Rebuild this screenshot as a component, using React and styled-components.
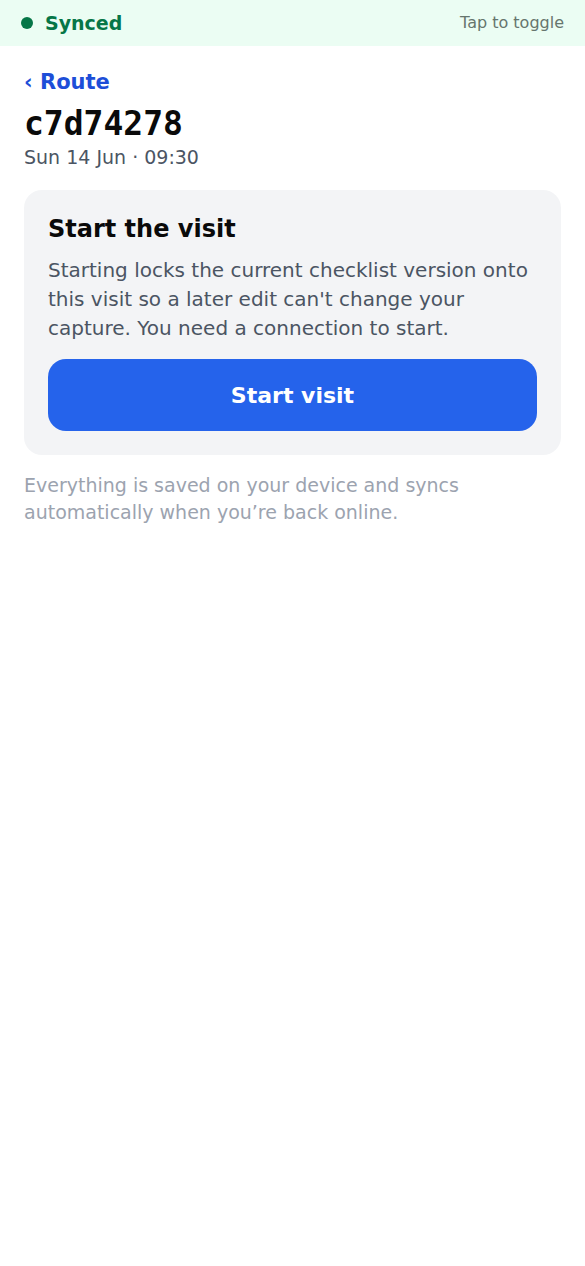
import React, { useState } from "react";
import styled, { createGlobalStyle } from "styled-components";

const GlobalStyle = createGlobalStyle`
  *, *::before, *::after { box-sizing: border-box; }
  body {
    margin: 0;
    background: #ffffff;
    color: #0a0a0a;
    font-family: "DejaVu Sans", sans-serif;
  }
  h1, h2, p { margin: 0; }
`;

const SyncBar = styled.button`
  display: flex;
  align-items: center;
  justify-content: space-between;
  width: 100%;
  padding: 12px 21px;
  border: 0;
  background: #ebfdf3;
  color: #067647;
  font-family: inherit;
  cursor: pointer;
`;

const SyncStatus = styled.span`
  display: flex;
  align-items: center;
  gap: 12px;
  font-size: 19px;
  line-height: 22px;
  font-weight: 700;
`;

const Dot = styled.span`
  width: 12px;
  height: 12px;
  border-radius: 50%;
  background: currentColor;
`;

const SyncHint = styled.span`
  color: #66756d;
  font-size: 16px;
  line-height: 22px;
`;

const Page = styled.main`
  display: flex;
  flex-direction: column;
  padding: 24px;
`;

const BackLink = styled.a`
  align-self: flex-start;
  color: #1d4ed8;
  font-size: 21px;
  line-height: 24px;
  font-weight: 700;
  text-decoration: none;
`;

const Title = styled.h1`
  margin-top: 10px;
  font-family: "DejaVu Sans Mono", monospace;
  font-size: 33px;
  line-height: 40px;
  font-weight: 700;
`;

const Schedule = styled.p`
  color: #4b5563;
  font-size: 19px;
  line-height: 26px;
`;

const Card = styled.section`
  display: flex;
  flex-direction: column;
  margin-top: 20px;
  padding: 24px;
  border-radius: 18px;
  background: #f3f4f6;
`;

const CardTitle = styled.h2`
  font-size: 24px;
  line-height: 30px;
  font-weight: 700;
`;

const CardText = styled.p`
  margin-top: 12px;
  color: #4b5563;
  font-size: 20px;
  line-height: 29px;
`;

const StartButton = styled.button`
  margin-top: 16px;
  height: 72px;
  border: 0;
  border-radius: 18px;
  background: #2563eb;
  color: #ffffff;
  font-family: inherit;
  font-size: 22px;
  font-weight: 700;
  cursor: pointer;
`;

const Note = styled.p`
  margin-top: 17px;
  color: #9ca3af;
  font-size: 19px;
  line-height: 27px;
`;

export default function App() {
  const [online, setOnline] = useState(true);
  return (
    <>
      <GlobalStyle />
      <SyncBar type="button" onClick={() => setOnline(!online)}>
        <SyncStatus><Dot />{online ? "Synced" : "Offline"}</SyncStatus>
        <SyncHint>Tap to toggle</SyncHint>
      </SyncBar>
      <Page>
        <BackLink href="#route">‹ Route</BackLink>
        <Title>c7d74278</Title>
        <Schedule>Sun 14 Jun · 09:30</Schedule>
        <Card>
          <CardTitle>Start the visit</CardTitle>
          <CardText>
            Starting locks the current checklist version onto this visit so a
            later edit can't change your capture. You need a connection to start.
          </CardText>
          <StartButton type="button">Start visit</StartButton>
        </Card>
        <Note>
          Everything is saved on your device and syncs automatically when you’re
          back online.
        </Note>
      </Page>
    </>
  );
}
